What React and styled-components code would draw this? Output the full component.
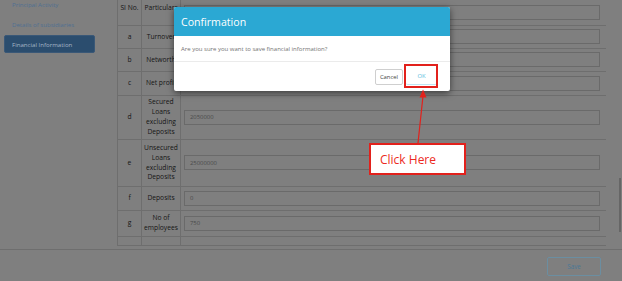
import React from 'react';
import styled, { createGlobalStyle } from 'styled-components';

// page is shown dimmed behind the confirmation dialog
const GlobalStyle = createGlobalStyle`
  html, body {
    margin: 0;
    padding: 0;
  }
  body {
    background: #7f7f7f;
    font-family: "Open Sans", "Liberation Sans", sans-serif;
  }
`;

const Page = styled.div`
  position: relative;
  width: 622px;
  height: 281px;
  overflow: hidden;
  background: #7f7f7f;
  display: flex;
  flex-direction: column;
`;

const Main = styled.div`
  display: flex;
  height: 249px;
  border-bottom: 1px solid #6e6e6e;
`;

const Sidebar = styled.nav`
  width: 117px;
  flex-shrink: 0;
  display: flex;
  flex-direction: column;
  gap: 2px;
  margin-top: -5px;
  padding-left: 4px;
  box-sizing: border-box;
`;

const NavItem = styled.div`
  width: 91px;
  height: 18px;
  box-sizing: border-box;
  display: flex;
  align-items: center;
  padding-left: 7px;
  font-size: 6.1px;
  border-radius: 2px;
  color: ${p => (p.$active ? '#a6b6c7' : '#4f6f92')};
  background: ${p => (p.$active ? '#2b4d6e' : 'transparent')};
  border: 1px solid ${p => (p.$active ? '#3a5877' : 'transparent')};
`;

const Content = styled.div`
  flex: 1;
  display: flex;
  align-items: flex-start;
`;

const Table = styled.table`
  width: 489px;
  table-layout: fixed;
  border-collapse: collapse;
  color: #151515;
  font-size: 6.7px;
`;

const Row = styled.tr`
  height: ${p => p.$h}px;
`;

const Cell = styled.td`
  border: 1px solid #6e6e6e;
  border-top: ${p => (p.$first ? 'none' : '1px solid #6e6e6e')};
  padding: ${p => (p.$head ? '3px 1px 0' : '0 1px')};
  text-align: center;
  vertical-align: ${p => (p.$head ? 'top' : 'middle')};
  line-height: 9.8px;
  white-space: nowrap;
`;

const ValueCell = styled.td`
  border-bottom: 1px solid #6e6e6e;
  padding: 0 6px 0 3px;
  vertical-align: middle;
`;

const Input = styled.div`
  height: 15px;
  box-sizing: border-box;
  border: 1px solid #6a6a6a;
  display: flex;
  align-items: center;
  padding-left: 5px;
  font-size: 5.9px;
  color: #4a4a4a;
`;

const ScrollTrack = styled.div`
  width: 3px;
  display: flex;
  flex-direction: column;
`;

const ScrollThumb = styled.div`
  margin-top: 178px;
  width: 2px;
  height: 54px;
  background: #666;
`;

const Footer = styled.div`
  flex: 1;
  display: flex;
  justify-content: flex-end;
  align-items: flex-start;
  padding: 7px 21px 0 0;
`;

const SaveButton = styled.button`
  width: 54px;
  height: 19px;
  background: transparent;
  border: 1px solid #6b8ea1;
  border-radius: 2px;
  color: #4a7896;
  font-family: inherit;
  font-size: 6.2px;
  padding: 0;
`;

const Modal = styled.div`
  position: absolute;
  left: 174px;
  top: 7px;
  width: 276px;
  height: 84px;
  background: #fff;
  border-radius: 2px;
  box-shadow: 0 2px 7px rgba(0, 0, 0, 0.55);
  display: flex;
  flex-direction: column;
  overflow: hidden;
`;

const ModalHeader = styled.div`
  height: 29px;
  background: #2ba8d3;
  color: #fff;
  font-size: 10.6px;
  display: flex;
  align-items: center;
  padding-left: 7px;
`;

const ModalBody = styled.div`
  height: 25px;
  display: flex;
  align-items: center;
  padding-left: 7px;
  font-size: 6px;
  color: #737373;
  border-bottom: 1px solid #ebebeb;
`;

const ModalFooter = styled.div`
  flex: 1;
  display: flex;
  justify-content: flex-end;
  align-items: center;
  gap: 3px;
  padding-right: 13px;
`;

const DialogButton = styled.button`
  height: 16px;
  width: ${p => (p.$primary ? '31px' : '28px')};
  background: #fff;
  font-family: inherit;
  font-size: 5.9px;
  padding: 0;
  border-radius: 2px;
  border: ${p => (p.$primary ? 'none' : '1px solid #cfcfcf')};
  border-bottom: 1px solid ${p => (p.$primary ? '#bfe5f2' : '#cfcfcf')};
  color: ${p => (p.$primary ? '#5bc0de' : '#444')};
`;

const Highlight = styled.div`
  position: absolute;
  left: 404px;
  top: 64px;
  width: 34px;
  height: 24px;
  box-sizing: border-box;
  border: 2px solid #e2211c;
`;

const Callout = styled.div`
  position: absolute;
  left: 369px;
  top: 143px;
  width: 97px;
  height: 32px;
  box-sizing: border-box;
  border: 2px solid #e2211c;
  background: #fff;
  color: #ec2a22;
  font-size: 12px;
  display: flex;
  align-items: center;
  padding-left: 9px;
`;

const ArrowLayer = styled.svg`
  position: absolute;
  left: 0;
  top: 0;
  pointer-events: none;
`;

const navItems = ['Principal Activity', 'Details of subsidiaries', 'Financial Information'];

const rows = [
  { sl: 'SI No.', label: ['Particulars'], value: '', h: 25, head: true },
  { sl: 'a', label: ['Turnover'], value: '', h: 23 },
  { sl: 'b', label: ['Networth'], value: '', h: 23 },
  { sl: 'c', label: ['Net profit'], value: '', h: 24 },
  { sl: 'd', label: ['Secured', 'Loans', 'excluding', 'Deposits'], value: '2050000', h: 44 },
  { sl: 'e', label: ['Unsecured', 'Loans', 'excluding', 'Deposits'], value: '25000000', h: 47 },
  { sl: 'f', label: ['Deposits'], value: '0', h: 24 },
  { sl: 'g', label: ['No of', 'employees'], value: '750', h: 26 },
  { sl: '', label: [], value: null, h: 9 },
];

export default function App() {
  return (
    <>
      <GlobalStyle />
      <Page>
        <Main>
          <Sidebar>
            {navItems.map((item, i) => (
              <NavItem key={item} $active={i === navItems.length - 1}>{item}</NavItem>
            ))}
          </Sidebar>
          <Content>
            <Table>
              <colgroup>
                <col style={{ width: 24 }} />
                <col style={{ width: 39 }} />
                <col />
              </colgroup>
              <tbody>
                {rows.map((row, i) => (
                  <Row key={i} $h={row.h}>
                    <Cell $first={i === 0} $head={row.head}>{row.sl}</Cell>
                    <Cell $first={i === 0} $head={row.head}>
                      {row.label.map((line, j) => (
                        <React.Fragment key={j}>
                          {j > 0 && <br />}
                          {line}
                        </React.Fragment>
                      ))}
                    </Cell>
                    <ValueCell>
                      {row.value !== null && <Input>{row.value}</Input>}
                    </ValueCell>
                  </Row>
                ))}
              </tbody>
            </Table>
          </Content>
          <ScrollTrack>
            <ScrollThumb />
          </ScrollTrack>
        </Main>
        <Footer>
          <SaveButton>Save</SaveButton>
        </Footer>

        <Modal>
          <ModalHeader>Confirmation</ModalHeader>
          <ModalBody>Are you sure you want to save financial information?</ModalBody>
          <ModalFooter>
            <DialogButton>Cancel</DialogButton>
            <DialogButton $primary>OK</DialogButton>
          </ModalFooter>
        </Modal>

        <Highlight />
        <ArrowLayer width="622" height="281">
          <line x1="418" y1="143" x2="423" y2="96" stroke="#e2211c" strokeWidth="1.2" />
          <polygon points="423,89.5 419.5,97.5 426.5,97.5" fill="#e2211c" />
        </ArrowLayer>
        <Callout>Click Here</Callout>
      </Page>
    </>
  );
}
